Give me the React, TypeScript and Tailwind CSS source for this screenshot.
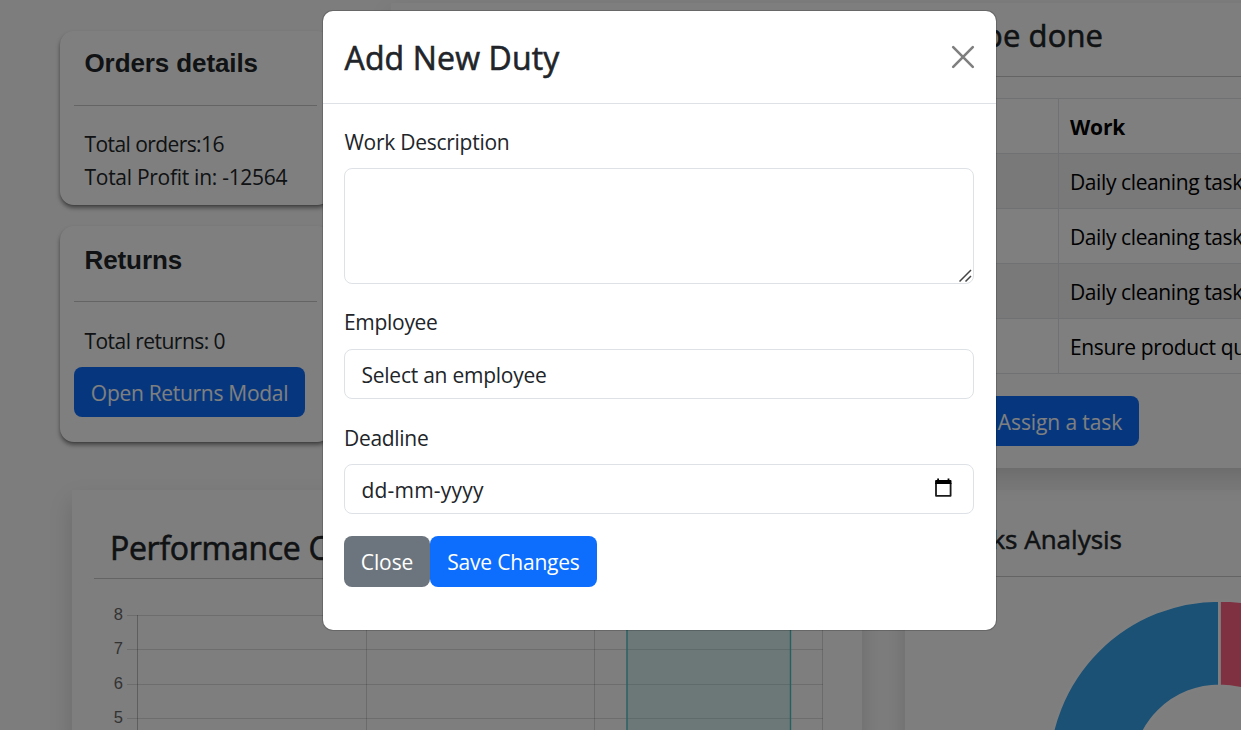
import type { ReactNode } from "react";

const duties = [
  { work: "Daily cleaning tasks", tracking: "tracking-[-0.4px]" },
  { work: "Daily cleaning tasks", tracking: "tracking-[-0.4px]" },
  { work: "Daily cleaning tasks", tracking: "tracking-[-0.4px]" },
  { work: "Ensure product quality", tracking: "tracking-[-0.35px]" },
];

function Card({ className = "", children }: { className?: string; children: ReactNode }) {
  return (
    <section
      className={`w-[271px] shrink-0 rounded-[14px] bg-white px-[14px] shadow-[0_3px_4px_rgba(0,0,0,0.45),0_1px_1px_rgba(0,0,0,0.1)] ${className}`}
    >
      {children}
    </section>
  );
}

function Button({ className = "", children }: { className?: string; children: ReactNode }) {
  return (
    <button
      type="button"
      className={`flex shrink-0 items-center justify-center rounded-[8px] whitespace-nowrap text-white ${className}`}
    >
      {children}
    </button>
  );
}

function PerformanceChart() {
  const rows = [
    { value: 8, y: 24.5 },
    { value: 7, y: 58.5 },
    { value: 6, y: 93.5 },
    { value: 5, y: 127.5 },
  ];
  return (
    <svg className="block" width="746" height="139" viewBox="0 0 746 139">
      {rows.map((row) => (
        <g key={row.value}>
          <line x1="33" x2="729" y1={row.y} y2={row.y} stroke="#000" strokeOpacity="0.13" />
          <text x="29" y={row.y + 4.7} textAnchor="end" fontSize="16.5" fill="#666" fontFamily="'Liberation Sans', sans-serif">
            {row.value}
          </text>
        </g>
      ))}
      <line x1="43.5" x2="43.5" y1="24" y2="139" stroke="#000" strokeOpacity="0.25" />
      <line x1="272.5" x2="272.5" y1="24" y2="139" stroke="#000" strokeOpacity="0.15" />
      <line x1="500.5" x2="500.5" y1="24" y2="139" stroke="#000" strokeOpacity="0.15" />
      <line x1="728.5" x2="728.5" y1="24" y2="139" stroke="#000" strokeOpacity="0.15" />
      <rect x="533" y="24" width="163.5" height="160" fill="#4bc0c0" fillOpacity="0.2" stroke="#4bc0c0" strokeWidth="1.4" />
    </svg>
  );
}

function TasksChart() {
  return (
    <svg className="block" width="336" height="153" viewBox="905 578.2 336 153">
      <path d="M1219.5 601.5 A171.5 171.5 0 0 0 1219.5 944.5 V859 A86 86 0 0 1 1219.5 687 Z" fill="#36a2eb" stroke="#fff" strokeWidth="2.75" />
      <path d="M1219.5 601.5 A171.5 171.5 0 0 1 1219.5 944.5 V859 A86 86 0 0 0 1219.5 687 Z" fill="#ff6384" stroke="#fff" strokeWidth="2.75" />
    </svg>
  );
}

function Dashboard() {
  return (
    <main className="flex h-full w-full flex-col bg-[#fafafa]">
      <div className="flex h-[490px] shrink-0">
        <div className="flex w-[391px] shrink-0 flex-col gap-[21px] pt-[31px] pl-[60px]">
          <Card className="h-[174px]">
            <div className="flex h-[75px] items-center border-b border-[#c8c8c8] pb-[10px] pl-[10.5px] font-['Liberation_Sans',sans-serif] text-[26px] font-bold tracking-[-0.1px]">
              Orders details
            </div>
            <div className="pt-[22px] pl-[10.5px] leading-[33px]">
              <div className="tracking-[-0.58px]">Total orders:16</div>
              <div className="tracking-[-0.28px]">Total Profit in: -12564</div>
            </div>
          </Card>
          <Card className="h-[216px]">
            <div className="flex h-[76px] items-center border-b border-[#c8c8c8] pb-[6px] pl-[10.5px] font-['Liberation_Sans',sans-serif] text-[26px] font-bold tracking-[-0.1px]">
              Returns
            </div>
            <div className="pt-[23px] pl-[10.5px] leading-[33px] tracking-[-0.55px]">Total returns: 0</div>
            <Button className="mt-[9px] h-[50px] w-[231px] bg-[#0d6efd] pt-[3px] tracking-[-0.3px]">Open Returns Modal</Button>
          </Card>
        </div>
        <section className="relative mt-[3px] h-[465px] w-[890px] shrink-0 bg-[#fdfdfd] pl-[428px] shadow-[0_11px_22px_rgba(0,0,0,0.15)]">
          <h2 className="flex h-[74px] items-center border-b border-[#c8c8c8] pb-[8px] pl-[38px] text-[31px] font-medium whitespace-nowrap tracking-[0.1px] [-webkit-text-stroke:0.6px]">
            Tasks to be done
          </h2>
          <table className="mt-[21px] w-[500px] border-collapse bg-white text-left text-black">
            <thead>
              <tr className="h-[55px]">
                <th className="w-[239px] border border-[#dee2e6] pl-[11px]">Employee</th>
                <th className="border border-[#dee2e6] pt-[3px] pl-[11px] font-bold tracking-[-0.2px]">Work</th>
              </tr>
            </thead>
            <tbody>
              {duties.map((duty, i) => (
                <tr key={i} className="h-[55px] odd:bg-[#f2f2f2]">
                  <td className="border border-[#dee2e6]" />
                  <td className={`border border-[#dee2e6] pt-[3px] pl-[11px] whitespace-nowrap ${duty.tracking}`}>{duty.work}</td>
                </tr>
              ))}
            </tbody>
          </table>
          <Button className="mt-[22px] ml-[162px] h-[50px] w-[158px] bg-[#0d6efd] pt-[3px] tracking-[-0.1px]">Assign a task</Button>
        </section>
      </div>
      <div className="flex h-[240px] shrink-0 gap-[43px] pl-[72px]">
        <section className="h-[300px] w-[790px] shrink-0 bg-[#fcfcfc] px-[22px] shadow-[0_11px_22px_rgba(0,0,0,0.15)]">
          <h2 className="flex h-[89px] items-center border-b border-[#c8c8c8] pt-[27px] pl-[16px] text-[32px] font-medium tracking-[-0.3px] [-webkit-text-stroke:0.6px]">
            Performance Chart
          </h2>
          <div className="pt-[12px]">
            <PerformanceChart />
          </div>
        </section>
        <section className="h-[300px] w-[400px] shrink-0 bg-[#fcfcfc] shadow-[0_11px_22px_rgba(0,0,0,0.15)]">
          <h2 className="flex h-[87px] w-[336px] items-center justify-end border-b border-[#c8c8c8] pt-[13px] pr-[119px] text-[26px] font-medium [-webkit-text-stroke:0.5px]">
            Tasks Analysis
          </h2>
          <TasksChart />
        </section>
      </div>
    </main>
  );
}

function DutyModal() {
  return (
    <div
      role="dialog"
      className="mt-[11px] h-[619px] w-[673px] rounded-[10px] bg-white shadow-[0_0_0_1px_rgba(0,0,0,0.175)]"
    >
      <header className="flex h-[93px] items-center justify-between border-b border-[#dee2e6] pr-[21px] pl-[21.5px]">
        <h1 className="pt-px text-[32px] font-medium tracking-[0.15px] [-webkit-text-stroke:0.6px]">Add New Duty</h1>
        <svg className="mb-px" width="24" height="24" viewBox="0 0 24 24" fill="none" stroke="#7f7f7f" strokeWidth="2.6" strokeLinecap="round" aria-label="Close">
          <path d="M2.2 2.2 L21.8 21.8 M21.8 2.2 L2.2 21.8" />
        </svg>
      </header>
      <form className="flex flex-col pt-[22px] pr-[22px] pl-[21px] leading-[33px]">
        <label className="pl-[0.5px] tracking-[-0.27px]">Work Description</label>
        <div className="relative mt-[9px] h-[116px]">
          <textarea className="block h-[116px] w-full resize-none rounded-[8px] border border-[#dee2e6] px-[17px] py-[8px] outline-none" />
          <svg className="absolute right-[2px] bottom-[2px]" width="13" height="13" viewBox="0 0 13 13" stroke="#444" strokeWidth="1.5" fill="none">
            <path d="M0.5 12.5 L12 1 M6.5 12.5 L12 7" />
          </svg>
        </div>
        <label className="mt-[22px] tracking-[-0.3px]">Employee</label>
        <div className="mt-[10px] flex h-[50px] items-center rounded-[8px] border border-[#dee2e6] pt-[2px] pl-[16.5px] tracking-[-0.25px]">
          Select an employee
        </div>
        <label className="mt-[23px] tracking-[-0.3px]">Deadline</label>
        <div className="mt-[9px] flex h-[50px] items-center justify-between rounded-[8px] border border-[#dee2e6] pr-[20px] pl-[16.5px]">
          <span className="pt-[2px] tracking-[0.2px]">dd-mm-yyyy</span>
          <svg className="mb-[3px]" width="19" height="20" viewBox="0 0 19 20" fill="none">
            <path d="M2 5 V17.8 H16.6 V5" stroke="#1a1a1a" strokeWidth="1.8" strokeLinejoin="round" />
            <path d="M2 2 H3.2 V0.5 H5 V2 H13.6 V0.5 H15.4 V2 H16.6 Q17.5 2 17.5 3 V6 H1.1 V3 Q1.1 2 2 2Z" fill="#000" />
          </svg>
        </div>
        <div className="mt-[22px] flex">
          <Button className="h-[51px] w-[86px] bg-[#6c757d] pt-[2px] tracking-[-0.1px]">Close</Button>
          <Button className="h-[51px] w-[167px] bg-[#0d6efd] pt-[2px] tracking-[-0.2px]">Save Changes</Button>
        </div>
      </form>
    </div>
  );
}

export default function App() {
  return (
    <div className="relative h-[730px] w-[1241px] overflow-hidden font-['Open_Sans','Noto_Sans',sans-serif] text-[21px] text-[#212529]">
      <Dashboard />
      <div className="absolute inset-0 bg-black/50 pl-[323px]">
        <DutyModal />
      </div>
    </div>
  );
}
